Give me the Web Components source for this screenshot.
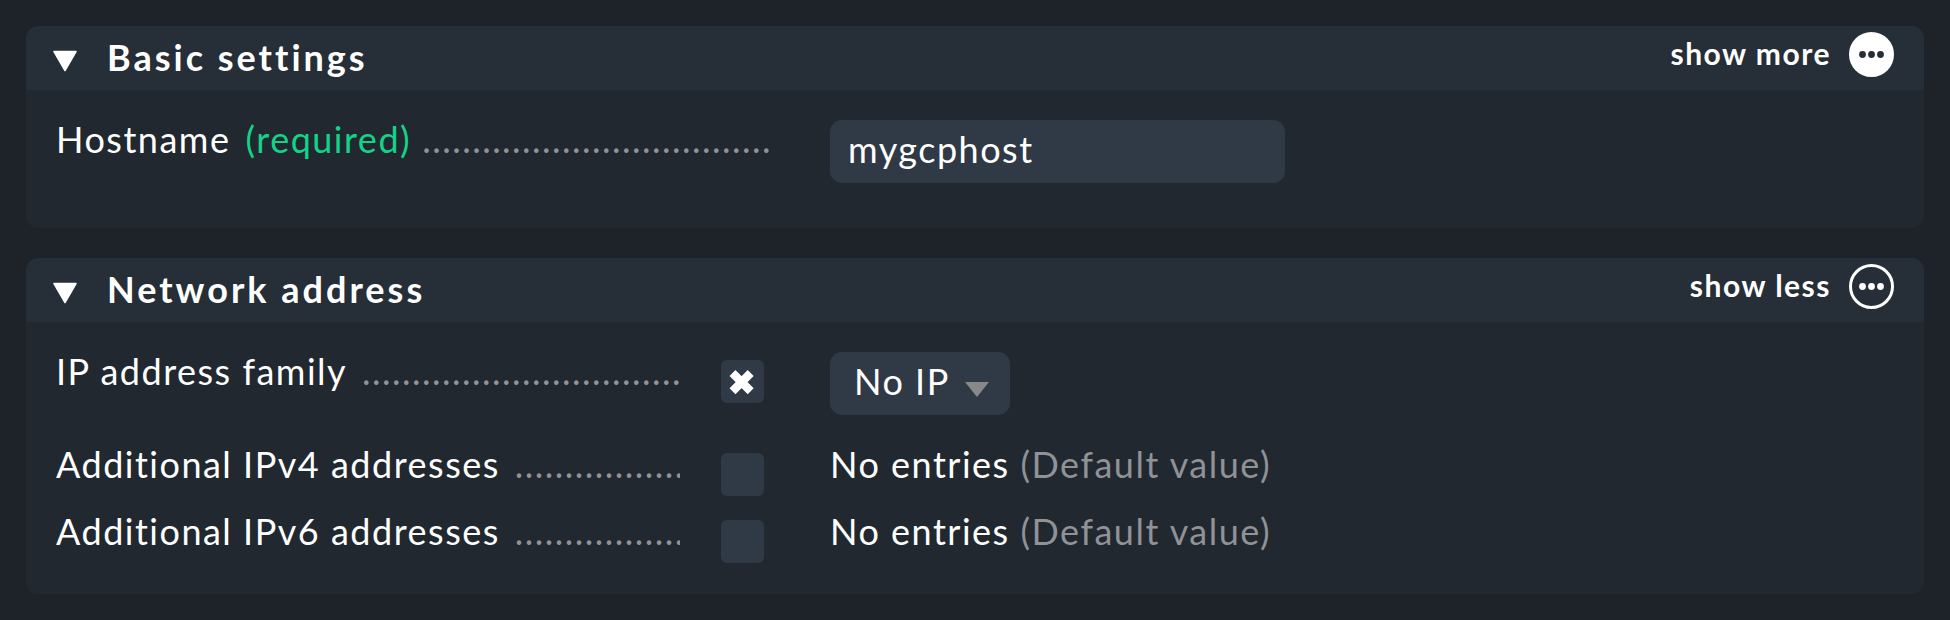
<!DOCTYPE html>
<html lang="en">
<head>
<meta charset="utf-8">
<title>Host properties</title>
<style>
  body {
    margin: 0;
    height: 620px;
    box-sizing: border-box;
    padding: 26px;
    overflow: hidden;
    background: #1e2229;
    color: #fff;
    font: 36px/44px Lato, "Liberation Sans", sans-serif;
    letter-spacing: 1.5px;
    display: flex;
    flex-direction: column;
    gap: 30px;
  }
  .hint { color: #8f9297; }
</style>
</head>
<body>
  <settings-panel heading="Basic settings" toggle="show more" style="--body-height:138px">
    <setting-row label="Hostname" required dots="35">
      <text-field value="mygcphost"></text-field>
    </setting-row>
  </settings-panel>
  <settings-panel heading="Network address" toggle="show less" style="--body-height:272px">
    <setting-row label="IP address family" dots="32" style="--row-height:93px">
      <check-box slot="check" checked></check-box>
      <drop-down value="No IP"></drop-down>
    </setting-row>
    <setting-row label="Additional IPv4 addresses" dots="17" plain>
      <check-box slot="check"></check-box>
      No entries <span class="hint">(Default value)</span>
    </setting-row>
    <setting-row label="Additional IPv6 addresses" dots="17" plain>
      <check-box slot="check"></check-box>
      No entries <span class="hint">(Default value)</span>
    </setting-row>
  </settings-panel>

<script>
  class SettingsPanel extends HTMLElement {
    connectedCallback() {
      const more = this.getAttribute('toggle') === 'show more';
      const dot = more ? '#262e37' : '#fff';
      this.attachShadow({ mode: 'open' }).innerHTML = `
        <style>
          :host { display: block; flex: none; border-radius: 12px; overflow: hidden; background: #21282f; }
          header { display: flex; height: 64px; background: #262e37; font-weight: 700; }
          .fold { flex: none; width: 26px; height: 22px; margin: 24px 0 0 26px; }
          h2 { margin: 9px 0 0 29px; font: inherit; letter-spacing: 3px; flex: 1; }
          .toggle { display: flex; margin-right: 30px; font-size: 30px; line-height: 36px; letter-spacing: 1.5px; }
          .toggle span { margin-top: 9px; }
          .toggle svg { width: 45px; height: 45px; margin: 6px 0 0 18px; }
          .body { box-sizing: border-box; height: var(--body-height); padding: 30px 30px 0; }
        </style>
        <header>
          <svg class="fold" viewBox="0 0 26 22"><path d="M2 1.5H24L13 20.5Z" fill="#fff" stroke="#fff" stroke-width="1.5" stroke-linejoin="round"/></svg>
          <h2>${this.getAttribute('heading')}</h2>
          <div class="toggle">
            <span>${this.getAttribute('toggle')}</span>
            <svg viewBox="0 0 45 45">
              <circle cx="22.5" cy="22.5" r="21" fill="${more ? '#fff' : 'none'}" stroke="#fff" stroke-width="3"/>
              <g fill="${dot}"><circle cx="13.5" cy="22.5" r="3.4"/><circle cx="22.5" cy="22.5" r="3.4"/><circle cx="31.5" cy="22.5" r="3.4"/></g>
            </svg>
          </div>
        </header>
        <div class="body"><slot></slot></div>`;
    }
  }

  class SettingRow extends HTMLElement {
    connectedCallback() {
      const req = this.hasAttribute('required');
      this.attachShadow({ mode: 'open' }).innerHTML = `
        <style>
          :host { display: grid; grid-template-columns: ${req ? '714px 0' : '624px 90px'} 1fr; height: var(--row-height, 67px); }
          .label { display: flex; margin-top: -3px; height: 44px; white-space: nowrap; }
          .req { color: #13d389; margin-left: 15px; }
          .dots { flex: 1; min-width: 0; overflow: hidden; color: #8f9297; margin-left: ${req ? 11 : 15}px; }
          .check { padding: 8px 0 0 41px; }
          .value { padding-left: 60px; white-space: nowrap; margin-top: ${this.hasAttribute('plain') ? -3 : 0}px; }
        </style>
        <div class="label"><span>${this.getAttribute('label')}</span>${req ? '<span class="req">(required)</span>' : ''}<span class="dots">${'.'.repeat(+this.getAttribute('dots'))}</span></div>
        <div class="check"><slot name="check"></slot></div>
        <div class="value"><slot></slot></div>`;
    }
  }

  class CheckBox extends HTMLElement {
    connectedCallback() {
      this.attachShadow({ mode: 'open' }).innerHTML = `
        <style>
          :host { display: block; width: 43px; height: 43px; border-radius: 6px; background: #303946; }
          svg { display: block; width: 43px; height: 43px; }
        </style>
        ${this.hasAttribute('checked') ? '<svg viewBox="0 0 43 43"><path d="M11.5 13L29.7 31.2M29.7 13L11.5 31.2" stroke="#fff" stroke-width="8.4" fill="none"/></svg>' : ''}`;
    }
  }

  class TextField extends HTMLElement {
    connectedCallback() {
      this.attachShadow({ mode: 'open' }).innerHTML = `
        <style>
          :host { display: block; box-sizing: border-box; width: 455px; height: 63px; padding: 7px 18px 0; border-radius: 12px; background: #303946; }
        </style><span>${this.getAttribute('value')}</span>`;
    }
  }

  class DropDown extends HTMLElement {
    connectedCallback() {
      this.attachShadow({ mode: 'open' }).innerHTML = `
        <style>
          :host { display: flex; justify-content: space-between; box-sizing: border-box; width: 180px; height: 63px; padding: 7px 21px 0 24px; border-radius: 12px; background: #303946; }
          svg { width: 24px; height: 15px; margin-top: 23px; }
        </style>
        <span>${this.getAttribute('value')}</span>
        <svg viewBox="0 0 24 15"><path d="M0 0H24L12 15Z" fill="#888"/></svg>`;
    }
  }

  customElements.define('settings-panel', SettingsPanel);
  customElements.define('setting-row', SettingRow);
  customElements.define('check-box', CheckBox);
  customElements.define('text-field', TextField);
  customElements.define('drop-down', DropDown);
</script>
</body>
</html>
